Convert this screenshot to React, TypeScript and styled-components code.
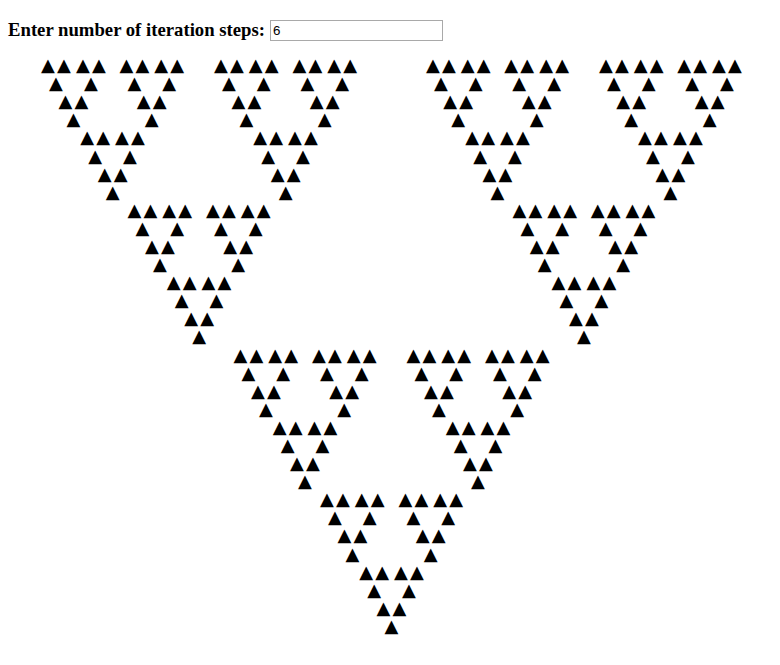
import React from "react";
import styled, { createGlobalStyle } from "styled-components";

const Global = createGlobalStyle`
  html, body { margin: 0; padding: 0; background: #ffffff; }
  body { padding: 8px; font-family: "Liberation Serif", "Times New Roman", serif; color: #000; }
`;

const Header = styled.div`
  display: flex;
  align-items: center;
  gap: 5px;
  margin-top: 11px;
`;

const Label = styled.label`
  font-family: "Liberation Serif", "Times New Roman", serif;
  font-weight: bold;
  font-size: 18.72px;
  line-height: 22px;
`;

const StepsInput = styled.input`
  box-sizing: border-box;
  width: 173px;
  height: 21px;
  border: 1px solid #a9a9a9;
  padding: 1px 2px;
  font-family: "Liberation Sans", Arial, sans-serif;
  font-size: 13.33px;
  color: #000;
  background: #fff;
  outline: none;
`;

const Figure = styled.div`
  display: flex;
  padding-left: 32px;
  margin-top: 15px;
`;

const Block = styled.div`
  display: flex;
  flex-direction: column;
  align-items: center;
`;

const Pair = styled.div<{ $gap: number }>`
  display: flex;
  gap: ${(p) => p.$gap}px;
`;

const Cell = styled.span`
  display: flex;
  justify-content: center;
  align-items: center;
  width: 16px;
  height: 18.1px;
  font-family: "DejaVu Sans", sans-serif;
  font-size: 18px;
  line-height: 18px;
  color: #000;
`;

const GAPS = [0, 0, 2.8, 11.6, 27.8, 66.7];

function Sierpinski({ level }: { level: number }) {
  if (level === 0) return <Cell>▲</Cell>;
  return (
    <Block>
      <Pair $gap={GAPS[level]}>
        <Sierpinski level={level - 1} />
        <Sierpinski level={level - 1} />
      </Pair>
      <Sierpinski level={level - 1} />
    </Block>
  );
}

export default function App() {
  return (
    <>
      <Global />
      <Header>
        <Label htmlFor="steps">Enter number of iteration steps:</Label>
        <StepsInput id="steps" type="text" defaultValue="6" />
      </Header>
      <Figure>
        <Sierpinski level={5} />
      </Figure>
    </>
  );
}
